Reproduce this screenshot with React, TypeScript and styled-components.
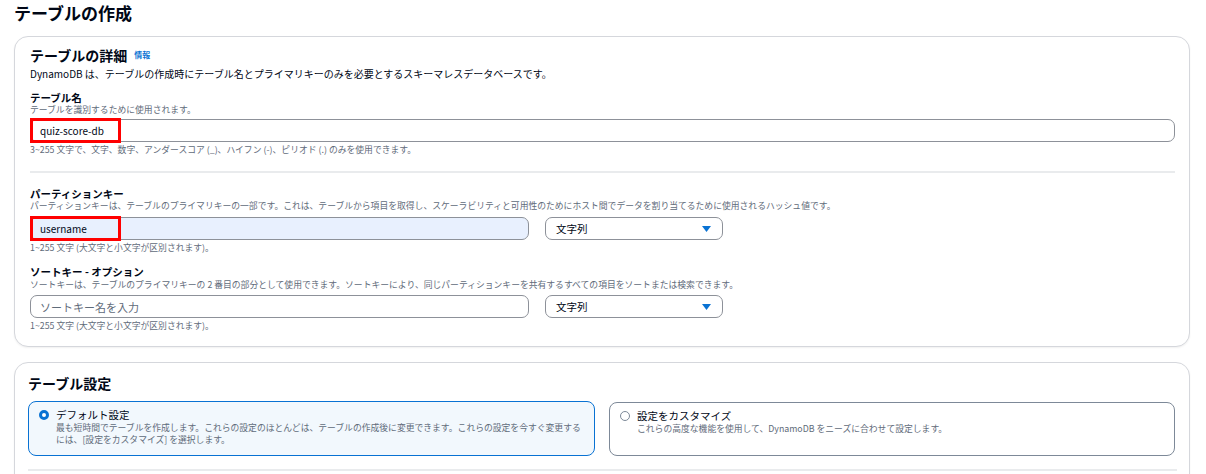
import React from "react";
import styled, { createGlobalStyle } from "styled-components";

const Global = createGlobalStyle`
  html, body {
    margin: 0;
    padding: 0;
    background: #ffffff;
    overflow: hidden;
  }
  body {
    font-family: "Noto Sans CJK JP", "Noto Sans", sans-serif;
    color: #000716;
  }
`;

const Page = styled.div`
  padding: 1px 16px 0 14px;
`;

const PageTitle = styled.h1`
  margin: 0;
  font-size: 17px;
  line-height: 24px;
  font-weight: 700;
  color: #000716;
`;

const Card = styled.section<{ $mt: number; $pt: number; $px: number; $pb: number }>`
  margin-top: ${(p) => p.$mt}px;
  border: 1px solid #d5d7dc;
  border-radius: 14px;
  box-shadow: 0 1px 2px rgba(0, 7, 22, 0.06);
  padding: ${(p) => `${p.$pt}px ${p.$px - 1}px ${p.$pb}px ${p.$px}px`};
  background: #fff;
`;

const CardHeading = styled.h2`
  margin: 0;
  display: flex;
  align-items: center;
  font-size: 14px;
  line-height: 20px;
  font-weight: 700;
`;

const InfoLink = styled.span`
  margin-left: 7px;
  font-size: 8px;
  font-weight: 700;
  color: #0972d3;
  line-height: 12px;
`;

const Description = styled.p`
  margin: 2px 0 0;
  font-size: 10px;
  line-height: 14px;
`;

const Field = styled.div<{ $mt: number }>`
  margin-top: ${(p) => p.$mt}px;
  display: flex;
  flex-direction: column;
`;

const Label = styled.div`
  font-size: 10.5px;
  line-height: 13px;
  font-weight: 700;
`;

const Hint = styled.div<{ $mt?: number }>`
  margin-top: ${(p) => p.$mt ?? 0}px;
  font-size: 8.8px;
  line-height: 12px;
  color: #5f6b7a;
  white-space: nowrap;
`;

const Row = styled.div<{ $mt: number }>`
  margin-top: ${(p) => p.$mt}px;
  display: flex;
  gap: 16px;
`;

const InputWrap = styled.div<{ $w?: number }>`
  position: relative;
  ${(p) => (p.$w ? `width: ${p.$w}px;` : "flex: 1;")}
`;

const TextBox = styled.div<{ $filled?: boolean; $placeholder?: boolean }>`
  box-sizing: border-box;
  height: 23px;
  border: 1px solid #8d9199;
  border-radius: 7px;
  background: ${(p) => (p.$filled ? "#e8f0fe" : "#ffffff")};
  padding: 0 9px;
  display: flex;
  align-items: center;
  font-size: ${(p) => (p.$placeholder ? "11px" : "10px")};
  color: ${(p) => (p.$placeholder ? "#5f6b7a" : "#000716")};
`;

const RedMark = styled.div`
  position: absolute;
  left: 0;
  top: -1px;
  width: 91px;
  height: 25px;
  box-sizing: border-box;
  border: 3px solid #ff0000;
  pointer-events: none;
`;

const Select = styled.div`
  box-sizing: border-box;
  width: 178px;
  height: 23px;
  border: 1px solid #8d9199;
  border-radius: 7px;
  background: #fff;
  padding: 0 11px 0 10px;
  display: flex;
  align-items: center;
  justify-content: space-between;
  font-size: 10.5px;
`;

const Divider = styled.hr<{ $mt: number }>`
  margin: ${(p) => p.$mt}px 0 0;
  border: 0;
  height: 2px;
  background: #e9ebed;
`;

const Tiles = styled.div`
  margin-top: 8px;
  display: grid;
  grid-template-columns: 567px 566px;
  column-gap: 14px;
`;

const Tile = styled.div<{ $active?: boolean }>`
  box-sizing: border-box;
  height: ${(p) => (p.$active ? 55 : 54)}px;
  margin-top: ${(p) => (p.$active ? 0 : 1)}px;
  border: 1px solid ${(p) => (p.$active ? "#0972d3" : "#7d8998")};
  border-radius: 8px;
  background: ${(p) => (p.$active ? "#f2f8fd" : "#ffffff")};
  padding: 6px 8px 0 10px;
  display: grid;
  grid-template-columns: 10px 1fr;
  column-gap: 7px;
  align-content: start;
`;

const Radio = styled.span<{ $checked?: boolean }>`
  box-sizing: border-box;
  width: 10px;
  height: 10px;
  margin-top: 2px;
  border-radius: 50%;
  background: #fff;
  border: ${(p) => (p.$checked ? "3px solid #0972d3" : "1.2px solid #7d8998")};
`;

const TileTitle = styled.div`
  font-size: 10.5px;
  line-height: 14px;
`;

const TileDesc = styled.div`
  grid-column: 2;
  font-size: 8.8px;
  line-height: 12px;
  color: #5f6b7a;
`;

const Caret = () => (
  <svg width="9" height="6" viewBox="0 0 9 6">
    <polygon points="0,0 9,0 4.5,6" fill="#0972d3" />
  </svg>
);

export default function App() {
  return (
    <>
      <Global />
      <Page>
        <PageTitle>テーブルの作成</PageTitle>

        <Card $mt={11} $pt={8} $px={15} $pb={14}>
          <CardHeading>
            テーブルの詳細<InfoLink>情報</InfoLink>
          </CardHeading>
          <Description>
            DynamoDB は、テーブルの作成時にテーブル名とプライマリキーのみを必要とするスキーマレスデータベースです。
          </Description>

          <Field $mt={10}>
            <Label>テーブル名</Label>
            <Hint>テーブルを識別するために使用されます。</Hint>
            <Row $mt={3}>
              <InputWrap>
                <TextBox>quiz-score-db</TextBox>
                <RedMark />
              </InputWrap>
            </Row>
            <Hint $mt={2}>
              3~255 文字で、文字、数字、アンダースコア (_)、ハイフン (-)、ピリオド (.) のみを使用できます。
            </Hint>
          </Field>

          <Divider $mt={15} />

          <Field $mt={14}>
            <Label>パーティションキー</Label>
            <Hint>
              パーティションキーは、テーブルのプライマリキーの一部です。これは、テーブルから項目を取得し、スケーラビリティと可用性のためにホスト間でデータを割り当てるために使用されるハッシュ値です。
            </Hint>
            <Row $mt={5}>
              <InputWrap $w={499}>
                <TextBox $filled>username</TextBox>
                <RedMark />
              </InputWrap>
              <Select>
                文字列
                <Caret />
              </Select>
            </Row>
            <Hint $mt={2}>1~255 文字 (大文字と小文字が区別されます)。</Hint>
          </Field>

          <Field $mt={11}>
            <Label>ソートキー - オプション</Label>
            <Hint $mt={1}>
              ソートキーは、テーブルのプライマリキーの 2 番目の部分として使用できます。ソートキーにより、同じパーティションキーを共有するすべての項目をソートまたは検索できます。
            </Hint>
            <Row $mt={4}>
              <InputWrap $w={499}>
                <TextBox $placeholder>ソートキー名を入力</TextBox>
              </InputWrap>
              <Select>
                文字列
                <Caret />
              </Select>
            </Row>
            <Hint $mt={2}>1~255 文字 (大文字と小文字が区別されます)。</Hint>
          </Field>
        </Card>

        <Card $mt={15} $pt={10} $px={13} $pb={60}>
          <CardHeading>テーブル設定</CardHeading>
          <Tiles>
            <Tile $active>
              <Radio $checked />
              <TileTitle>デフォルト設定</TileTitle>
              <TileDesc>
                最も短時間でテーブルを作成します。これらの設定のほとんどは、テーブルの作成後に変更できます。これらの設定を今すぐ変更するには、[設定をカスタマイズ] を選択します。
              </TileDesc>
            </Tile>
            <Tile>
              <Radio />
              <TileTitle>設定をカスタマイズ</TileTitle>
              <TileDesc>
                これらの高度な機能を使用して、DynamoDB をニーズに合わせて設定します。
              </TileDesc>
            </Tile>
          </Tiles>
          <Divider $mt={13} />
        </Card>
      </Page>
    </>
  );
}
